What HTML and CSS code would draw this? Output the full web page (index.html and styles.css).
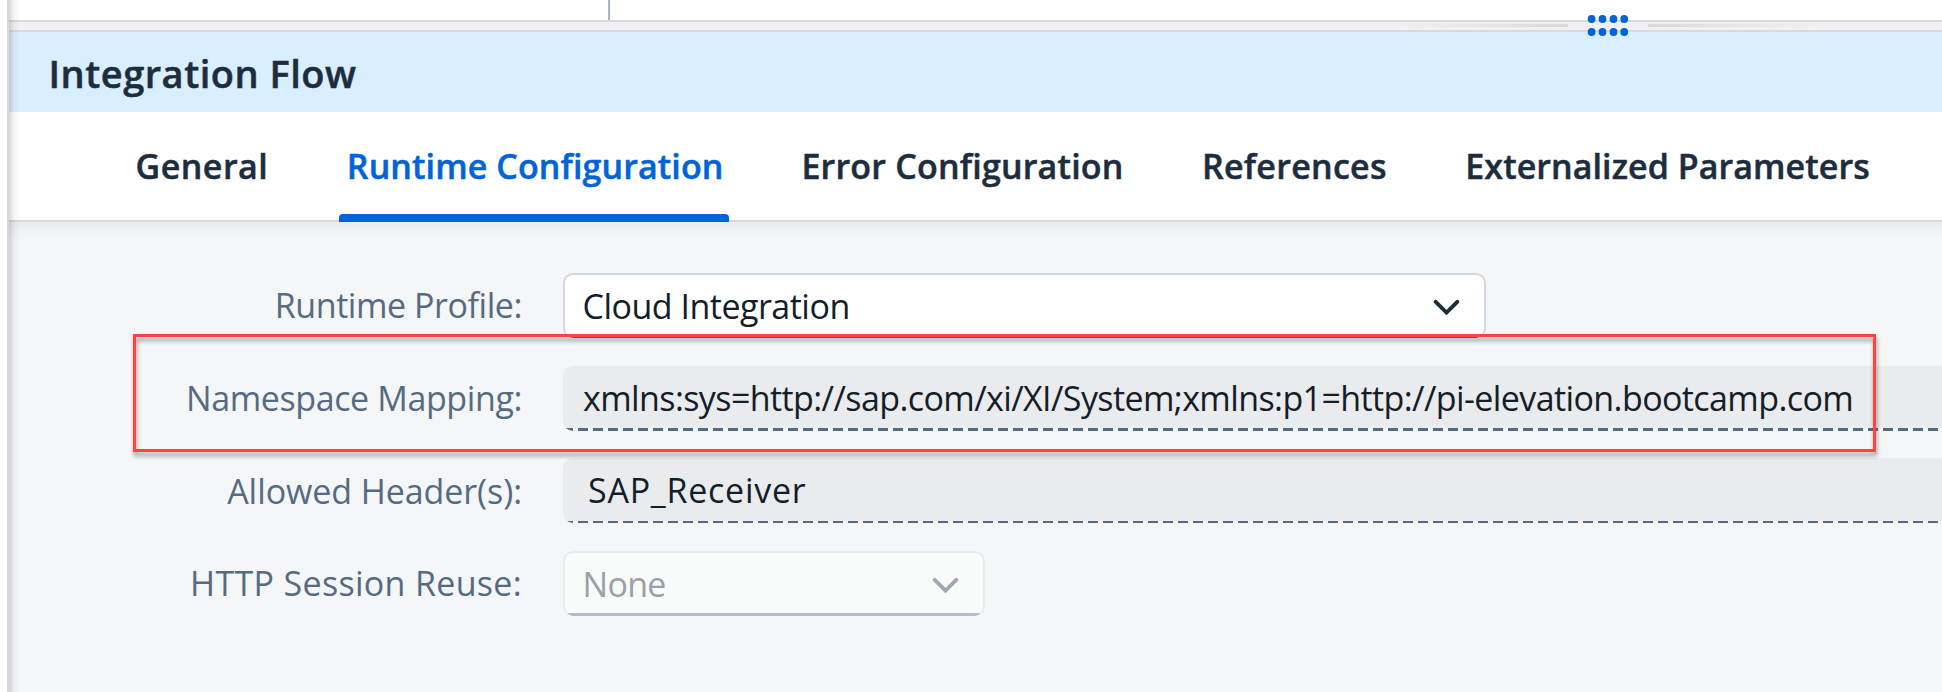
FILE: index.html
```html
<!DOCTYPE html>
<html lang="en">
<head>
<meta charset="utf-8">
<title>Integration Flow</title>
<link rel="stylesheet" href="styles.css">
</head>
<body>
<div class="app">
  <main class="panel">
    <div class="canvas-area"><span class="pool-edge"></span></div>
    <div class="splitter">
      <span class="splitter-line splitter-line-left"></span>
      <svg class="grip" width="42" height="26" viewBox="0 0 42 26" fill="#0064d9">
        <ellipse cx="4.6" cy="6" rx="3.9" ry="4"/><ellipse cx="15.5" cy="6" rx="3.9" ry="4"/><ellipse cx="26.5" cy="6" rx="3.9" ry="4"/><ellipse cx="37.2" cy="6" rx="3.9" ry="4"/>
        <ellipse cx="4.6" cy="19" rx="3.9" ry="4"/><ellipse cx="15.5" cy="19" rx="3.9" ry="4"/><ellipse cx="26.5" cy="19" rx="3.9" ry="4"/><ellipse cx="37.2" cy="19" rx="3.9" ry="4"/>
      </svg>
      <span class="splitter-line splitter-line-right"></span>
    </div>
    <h1 class="title">Integration Flow</h1>
    <nav class="tabs">
      <a class="tab tab-general">General</a>
      <a class="tab tab-runtime active">Runtime Configuration</a>
      <a class="tab tab-error">Error Configuration</a>
      <a class="tab tab-references">References</a>
      <a class="tab tab-params">Externalized Parameters</a>
    </nav>
    <section class="form">
      <label class="label label-profile">Runtime Profile:</label>
      <div class="select select-profile">
        <span>Cloud Integration</span>
        <svg class="chevron" width="27" height="17" viewBox="0 0 27 17"><path d="M2.7 2.8 13.5 13.6 24.3 2.8"/></svg>
      </div>
      <label class="label label-namespace">Namespace Mapping:</label>
      <div class="field field-namespace"><span>xmlns:sys=http://sap.com/xi/XI/System;xmlns:p1=http://pi-elevation.bootcamp.com</span></div>
      <label class="label label-headers">Allowed Header(s):</label>
      <div class="field field-headers"><span>SAP_Receiver</span></div>
      <label class="label label-session">HTTP Session Reuse:</label>
      <div class="select select-session disabled">
        <span>None</span>
        <svg class="chevron" width="27" height="17" viewBox="0 0 27 17"><path d="M2.7 2.8 13.5 13.6 24.3 2.8"/></svg>
      </div>
    </section>
    <div class="edge-shadow"></div>
  </main>
  <div class="highlight"></div>
</div>
</body>
</html>
```
FILE: styles.css
```css
* { box-sizing: border-box; }
body {
  margin: 0;
  background: #fff;
  color: #1d2d3e;
  font-family: "Open Sans", "Noto Sans", sans-serif;
  font-size: 34px;
  white-space: nowrap;
}
.app {
  position: relative;
  height: 692px;
  padding-left: 7px;
  overflow: hidden;
}
.panel {
  position: relative;
  display: flex;
  flex-direction: column;
  height: 100%;
  border-left: 2px solid #d9d9d9;
}
.edge-shadow {
  position: absolute;
  inset: 0 auto 0 0;
  width: 11px;
  background: linear-gradient(90deg, rgba(70, 80, 90, .22), rgba(70, 80, 90, .06) 45%, rgba(70, 80, 90, 0));
}
.canvas-area { flex: none; display: flex; height: 20px; padding-left: 599px; }
.pool-edge { width: 2px; background: #a9b4be; }

.splitter {
  flex: none;
  display: flex;
  align-items: center;
  height: 12px;
  padding-left: 1390px;
  background: #eff1f2;
  border-top: 2px solid #d9d9d9;
  border-bottom: 2px solid #d9d9d9;
}
.splitter-line { width: 169px; height: 3px; margin-top: -1px; }
.splitter-line-left { background: linear-gradient(90deg, rgba(217, 217, 217, 0), #d9d9d9); }
.splitter-line-right { background: linear-gradient(90deg, #d9d9d9, rgba(217, 217, 217, 0)); }
.grip { position: relative; flex: none; margin: 0 19px; z-index: 1; }

.title {
  flex: none;
  height: 80px;
  margin: 0;
  padding: 3px 0 0 39.5px;
  background: #d9eeff;
  font-size: 38px;
  font-weight: 600;
  line-height: 77px;
  letter-spacing: .5px;
  -webkit-text-stroke: .5px currentColor;
}
.tabs {
  flex: none;
  display: flex;
  gap: 63.5px;
  height: 110px;
  padding-left: 119px;
  border-bottom: 2px solid #d9d9d9;
  background: #fff;
}
.tab {
  position: relative;
  height: 110px;
  padding: 0 7px;
  line-height: 109px;
  font-weight: 600;
  -webkit-text-stroke: .5px currentColor;
}
.tab.active { color: #0064d9; }
.tab.active::after {
  content: "";
  position: absolute;
  inset: auto 1px 0 -1px;
  height: 8px;
  background: #0064d9;
  border-radius: 4px 4px 0 0;
}
.tab-general { letter-spacing: .5px; margin: 0 1px 0 .5px; }
.tab-runtime { letter-spacing: .1px; margin-right: .5px; }
.tab-error { letter-spacing: .2px; margin-right: .8px; }
.tab-references { letter-spacing: .28px; margin-right: 1px; }
.tab-params { letter-spacing: .07px; }

.form {
  flex: 1;
  display: grid;
  grid-template-columns: 513px 1fr;
  grid-template-rows: 93px 92px 93px 65px;
  column-gap: 41px;
  padding-top: 51px;
  background: linear-gradient(#e9ebec, #f4f6f8 16px, #f5f6f8 22px);
}
.label {
  height: 65px;
  line-height: 64px;
  text-align: right;
  color: #556b82;
}
.label-profile { letter-spacing: -.44px; }
.label-namespace { letter-spacing: -.39px; }
.label-headers { line-height: 66px; letter-spacing: -.08px; }
.label-session { line-height: 65px; letter-spacing: .32px; }

.select {
  position: relative;
  display: flex;
  align-items: center;
  justify-content: space-between;
  height: 65px;
  padding: 0 24px 1px 17.5px;
  overflow: hidden;
  border: 2px solid #d2d8df;
  border-bottom-width: 0;
  border-radius: 10px;
  background: #fff;
  color: #131e29;
}
.select::after {
  content: "";
  position: absolute;
  inset: auto -2px 0;
  height: 3px;
  background: #556b82;
}
.select-profile { width: 923px; letter-spacing: -.5px; }
.select-session { width: 422px; letter-spacing: -.7px; }
.chevron {
  position: relative;
  top: 1px;
  flex: none;
  fill: none;
  stroke: #1d2d3e;
  stroke-width: 3.9;
  stroke-linecap: round;
}
.disabled { background: #f9fbfa; border-color: #e8eaed; color: #9ba1a7; }
.disabled::after { background: #b2bdc9; }
.disabled .chevron { stroke: #a0a8b1; }

.field {
  height: 65px;
  padding-left: 20px;
  border-radius: 10px 0 0 10px;
  color: #131e29;
  line-height: 64px;
  background:
    repeating-linear-gradient(90deg, #556b82 0 10px, #f5f6f8 10px 15px) bottom / 100% 3px no-repeat,
    #eaebed;
}
.field-namespace { letter-spacing: -.6px; }
.field-headers {
  padding-left: 25px;
  line-height: 65px;
  letter-spacing: .75px;
  background-size: 100% 2px, auto;
}
.highlight {
  position: absolute;
  left: 133px;
  top: 334px;
  width: 1743px;
  height: 118px;
  border: 3px solid #ff4343;
  filter: drop-shadow(1px 4px 2px rgba(0, 0, 0, .38));
}
```
